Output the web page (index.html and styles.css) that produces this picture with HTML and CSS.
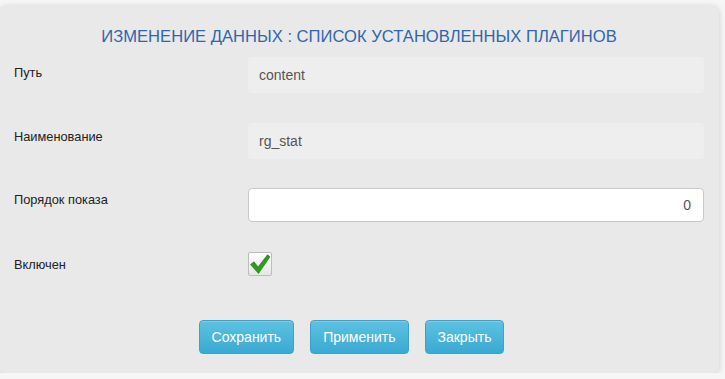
FILE: index.html
```html
<!DOCTYPE html>
<html>
<head>
<meta charset="utf-8">
<link rel="stylesheet" href="styles.css">
</head>
<body>
<div class="panel">
  <h1 class="title">ИЗМЕНЕНИЕ ДАННЫХ : СПИСОК УСТАНОВЛЕННЫХ ПЛАГИНОВ</h1>
  <div class="form">
    <div class="row row-1">
      <div class="label">Путь</div>
      <div class="field readonly">content</div>
    </div>
    <div class="row row-2">
      <div class="label">Наименование</div>
      <div class="field readonly">rg_stat</div>
    </div>
    <div class="row row-3">
      <div class="label">Порядок показа</div>
      <div class="field input">0</div>
    </div>
    <div class="row row-check">
      <div class="label">Включен</div>
      <div class="check">
        <svg width="22" height="22" viewBox="0 0 22 22"><path d="M1.5 11.5 L5 8.8 L9 14 L18.5 1.8 L21 3.8 L9.5 20.5 Z" fill="#2e9a1e" stroke="#1d7410" stroke-width="0.6" stroke-linejoin="round"/></svg>
      </div>
    </div>
  </div>
  <div class="buttons">
    <button class="btn">Сохранить</button>
    <button class="btn">Применить</button>
    <button class="btn">Закрыть</button>
  </div>
</div>
</body>
</html>
```
FILE: styles.css
```css
html, body {
  margin: 0;
  padding: 0;
  background: #f6f6f6;
  font-family: "Liberation Sans", Arial, sans-serif;
}
.panel {
  box-sizing: border-box;
  margin: 6px 6px 0 -1px;
  width: 720px;
  height: 367px;
  background: #e9e9e9;
  border-radius: 7px;
  box-shadow: 0 1px 6px rgba(0,0,0,0.18);
  padding: 0 15px 0 15px;
}
.title {
  margin: 0;
  padding-top: 22px;
  height: 29px;
  text-align: center;
  font-weight: normal;
  font-size: 16.6px;
  line-height: 18px;
  color: #3066ad;
}
.form {
  display: flex;
  flex-direction: column;
}
.row {
  display: grid;
  grid-template-columns: 234px 1fr;
  height: 66px;
}
.label {
  font-size: 12.8px;
  color: #222;
  padding-top: 8px;
}
.row-2 .label {
  padding-top: 6px;
}
.row-3 .label {
  padding-top: 3px;
}
.field {
  box-sizing: border-box;
  height: 36px;
  border-radius: 4px;
  font-size: 14px;
  color: #555;
  line-height: 36px;
  padding: 0 11px;
}
.readonly {
  background: #eeeeee;
}
.input {
  height: 34px;
  line-height: 32px;
  background: #fff;
  border: 1px solid #c9c9c9;
  text-align: right;
  padding-right: 12px;
  margin-top: -1px;
}
.row-check {
  height: 65px;
}
.row-check .label {
  padding-top: 2px;
}
.check {
  box-sizing: border-box;
  width: 24px;
  height: 24px;
  margin-top: -3px;
  border: 1px solid #bdbdbd;
  border-radius: 2px;
  background: linear-gradient(#ffffff, #e6e6e6);
  display: flex;
  align-items: center;
  justify-content: center;
}
.buttons {
  display: flex;
  justify-content: center;
  gap: 16px;
  padding-right: 15px;
}
.btn {
  height: 34px;
  padding: 0 12px;
  border: 1px solid #3ba2c9;
  border-radius: 4px;
  background: linear-gradient(#5ec2e1, #3aa9d2);
  color: #fff;
  font-family: "Liberation Sans", Arial, sans-serif;
  font-size: 14px;
  box-shadow: inset 0 1px 0 rgba(255,255,255,0.2);
}
```
